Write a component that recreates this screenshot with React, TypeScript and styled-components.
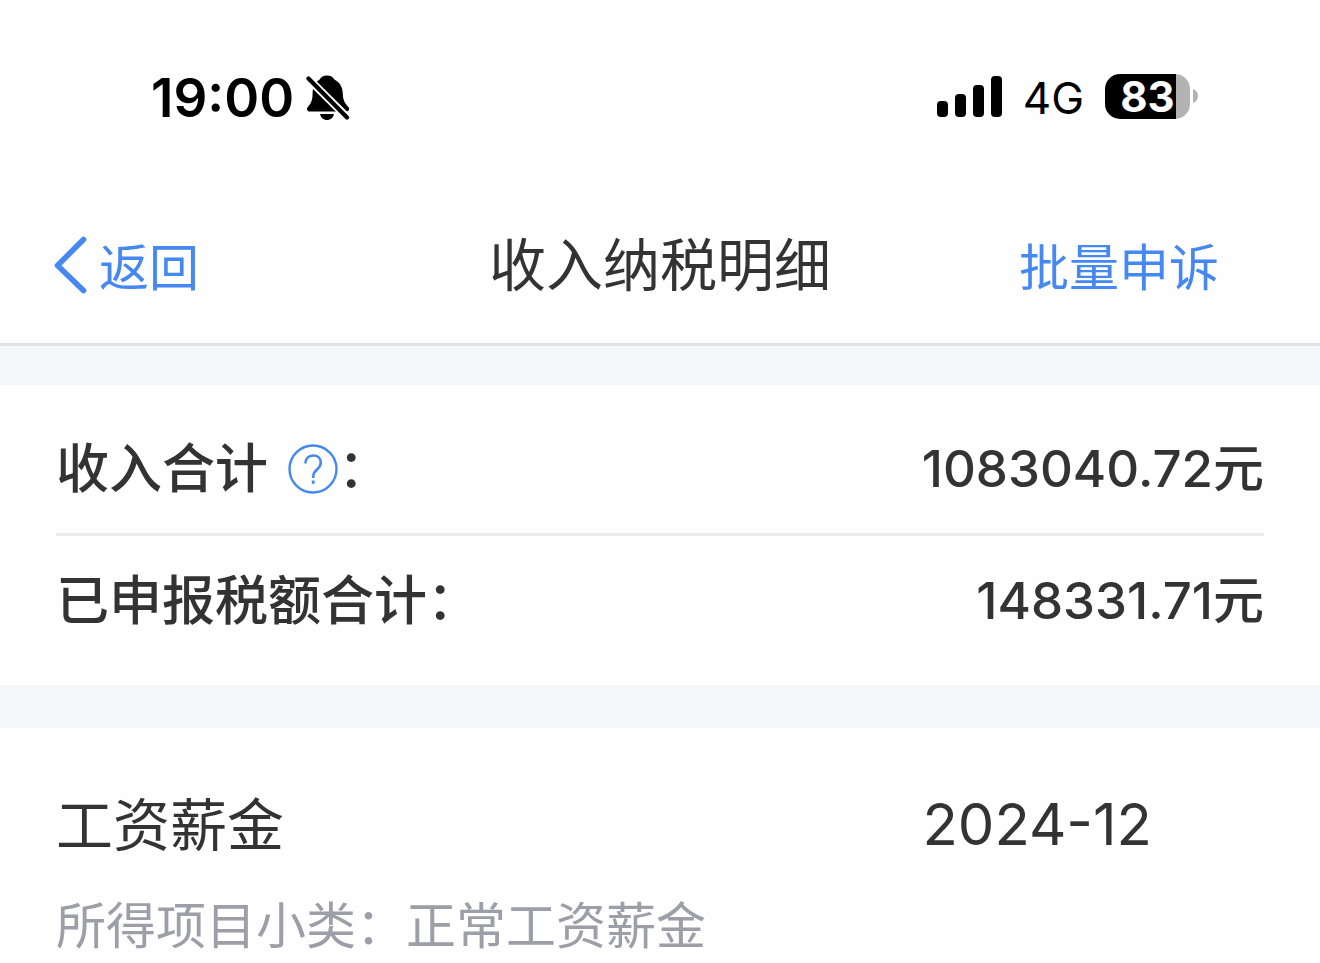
import React from "react";
import styled, { createGlobalStyle } from "styled-components";

const GlobalStyle = createGlobalStyle`
  *, *::before, *::after { box-sizing: border-box; }
  body {
    margin: 0;
    background: #fefefe;
    color: #333333;
    font-family: Inter, "Noto Sans CJK SC", sans-serif;
  }
`;

const Page = styled.div`
  display: flex;
  flex-direction: column;
  background: #fefefe;
`;

const StatusBar = styled.div`
  display: flex;
  align-items: center;
  justify-content: space-between;
  height: 196px;
  padding: 0 122px 0 151px;
  color: #000000;
`;

const StatusGroup = styled.div<{ $gap: number; $raised?: boolean }>`
  display: flex;
  align-items: center;
  gap: ${(p) => p.$gap}px;
  padding-bottom: ${(p) => (p.$raised ? 4 : 0)}px;
`;

const Clock = styled.time`
  font-size: 53px;
  font-weight: 600;
  line-height: 64px;
`;

const Network = styled.span`
  padding-top: 4px;
  font-size: 44px;
  line-height: 56px;
`;

const Battery = styled.div`
  display: flex;
  align-items: center;
  gap: 3px;
`;

const BatteryBody = styled.div`
  display: flex;
  align-items: center;
  justify-content: center;
  width: 85px;
  height: 45px;
  border-radius: 15px;
  background: linear-gradient(to right, #000000 83%, #b3b3b3 83%);
  color: #ffffff;
  font-size: 42px;
  font-weight: 700;
  line-height: 45px;
`;

const NavBar = styled.header`
  display: grid;
  grid-template-columns: 1fr auto 1fr;
  align-items: center;
  height: 150px;
  padding: 0 53px 8px;
  border-bottom: 3px solid #e0e4e8;
`;

const Title = styled.h1`
  margin: 0;
  font-size: 57px;
  font-weight: 400;
  line-height: 72px;
`;

const NavButton = styled.button<{ $end?: boolean }>`
  display: flex;
  align-items: center;
  justify-self: ${(p) => (p.$end ? "end" : "start")};
  gap: 12px;
  margin: 0;
  padding: ${(p) => (p.$end ? "4px 48px 0 0" : "4px 0 0")};
  border: 0;
  background: none;
  color: #4688f1;
  font: inherit;
  font-size: 50px;
  line-height: 72px;
  cursor: pointer;

  svg {
    margin-bottom: 6px;
  }
`;

const Band = styled.div<{ $height: number }>`
  height: ${(p) => p.$height}px;
  background: #f4f6fa;
`;

const Summary = styled.dl`
  margin: 0;
  padding: 0 56px 20px;
`;

const SummaryRow = styled.div`
  display: flex;
  align-items: center;
  justify-content: space-between;
  height: 148px;
  padding-top: 20px;
  font-size: 53px;
  font-weight: 500;
  line-height: 72px;

  & + & {
    height: 132px;
    padding-top: 0;
    border-top: 3px solid #ebebeb;
  }
`;

const Term = styled.dt`
  display: flex;
  align-items: center;
`;

const Amount = styled.dd`
  margin: 0;
  font-size: 51px;
`;

const HelpButton = styled.button`
  display: flex;
  margin: 0 0 0 20px;
  padding: 0;
  border: 0;
  background: none;
  cursor: pointer;
`;

const Record = styled.article`
  padding: 60px 56px 0;
`;

const RecordHead = styled.div`
  display: flex;
  align-items: flex-start;
  justify-content: space-between;
  padding-right: 112px;
  line-height: 72px;
`;

const RecordTitle = styled.h2`
  margin: 0;
  padding-top: 2px;
  font-size: 57px;
  font-weight: 400;
`;

const Period = styled.time`
  font-size: 58px;
`;

const Detail = styled.p`
  margin: 28px 0 0;
  color: #9c9fa8;
  font-size: 50px;
  line-height: 72px;
`;

const MutedBell = () => (
  <svg width="44" height="46" viewBox="0 0 44 46" aria-label="静音" role="img">
    <path
      d="M21 .5c-3.600 0-6 1.600-7.300 4C8.500 7.500 6.800 12 6.600 18.500c-.2 8-1.800 9.800-4.800 13.500-1.600 2-.6 4.500 2 4.500h36.600c2.600 0 3.500-2.500 2-4.500-3.200-3.700-5.400-6-5.600-13.500-.2-6.500-2.800-11-8.500-14C27 2.100 24.600.5 21 .5z"
      fill="#000"
    />
    <path d="M14 39h14c-.8 3.800-3.400 6-7 6s-6.200-2.200-7-6z" fill="#000" />
    <path d="M0 1.500 44 45" stroke="#fefefe" strokeWidth="8" />
    <path d="M2.500 3.500 41 42.500" stroke="#000" strokeWidth="4.200" strokeLinecap="round" />
  </svg>
);

const Signal = () => (
  <svg width="66" height="41" viewBox="0 0 66 41" aria-label="信号" role="img">
    <rect x="1" y="25" width="11" height="16" rx="4" />
    <rect x="19" y="18" width="11" height="23" rx="4" />
    <rect x="37" y="9" width="11" height="32" rx="4" />
    <rect x="55" y="0" width="11" height="41" rx="4" />
  </svg>
);

const BatteryTip = () => (
  <svg width="5" height="14" viewBox="0 0 5 14" aria-hidden="true">
    <path d="M0 0c3 .8 5 3.500 5 7s-2 6.200-5 7z" fill="#b3b3b3" />
  </svg>
);

const BackArrow = () => (
  <svg width="34" height="58" viewBox="0 0 34 58" aria-hidden="true">
    <path
      d="M30.500 3.500 4.500 29.500l26 25"
      fill="none"
      stroke="#4688f1"
      strokeWidth="5.600"
      strokeLinecap="round"
      strokeLinejoin="round"
    />
  </svg>
);

const HelpIcon = () => (
  <svg width="50" height="50" viewBox="0 0 50 50" fill="none" stroke="#4688f1" aria-hidden="true">
    <circle cx="25" cy="25" r="23.500" strokeWidth="2.400" />
    <path d="M17.500 19.500c0-5 3-8 7.700-8s7.600 2.900 7.600 7c0 3.200-1.600 5-4 7.200-2.600 2.400-3.600 3.600-3.600 8.300" strokeWidth="2.600" />
    <path d="M25.200 36.500v3.300" strokeWidth="2.800" />
  </svg>
);

export default function App() {
  return (
    <Page lang="zh-CN">
      <GlobalStyle />
      <StatusBar>
        <StatusGroup $gap={12}>
          <Clock>19:00</Clock>
          <MutedBell />
        </StatusGroup>
        <StatusGroup $gap={21} $raised>
          <Signal />
          <Network>4G</Network>
          <Battery>
            <BatteryBody>83</BatteryBody>
            <BatteryTip />
          </Battery>
        </StatusGroup>
      </StatusBar>
      <NavBar>
        <NavButton type="button">
          <BackArrow />
          返回
        </NavButton>
        <Title>收入纳税明细</Title>
        <NavButton type="button" $end>
          批量申诉
        </NavButton>
      </NavBar>
      <main>
        <Band $height={39} />
        <Summary>
          <SummaryRow>
            <Term>
              收入合计
              <HelpButton type="button" aria-label="收入合计说明">
                <HelpIcon />
              </HelpButton>
              ：
            </Term>
            <Amount>1083040.72元</Amount>
          </SummaryRow>
          <SummaryRow>
            <Term>已申报税额合计：</Term>
            <Amount>148331.71元</Amount>
          </SummaryRow>
        </Summary>
        <Band $height={43} />
        <Record>
          <RecordHead>
            <RecordTitle>工资薪金</RecordTitle>
            <Period dateTime="2024-12">2024-12</Period>
          </RecordHead>
          <Detail>所得项目小类：正常工资薪金</Detail>
        </Record>
      </main>
    </Page>
  );
}
